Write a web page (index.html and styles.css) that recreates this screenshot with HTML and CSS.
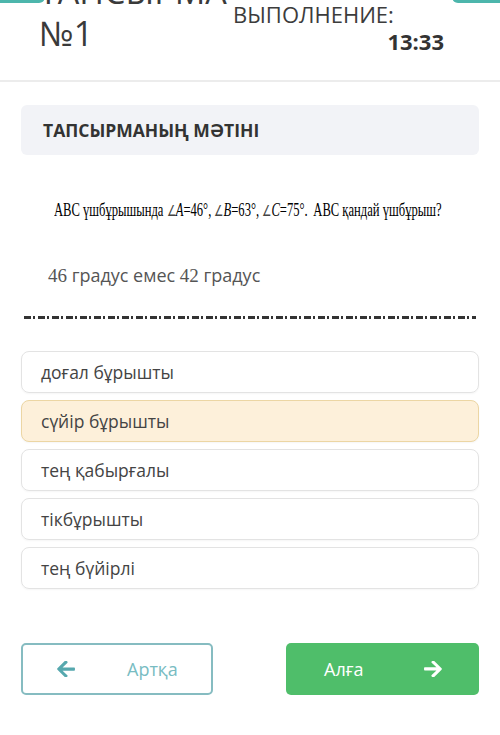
FILE: index.html
```html
<!DOCTYPE html>
<html lang="kk">
<head>
    <meta charset="UTF-8">
    <meta name="viewport" content="width=device-width, initial-scale=1.0">
    <title>Тапсырма №1</title>
    <link rel="stylesheet" href="styles.css">
</head>
<body>
    <header class="top">
        <span class="tab tab-left"></span>
        <span class="tab tab-right"></span>
        <div class="top-inner">
            <h1 class="task-title">ТАПСЫРМА<br>№1</h1>
            <div class="timer">
                <span class="timer-label">ВЫПОЛНЕНИЕ:</span>
                <span class="timer-value">13:33</span>
            </div>
        </div>
    </header>

    <main class="content">
        <div class="card-head">ТАПСЫРМАНЫҢ МӘТІНІ</div>

        <div class="question"><span class="question-text">ABC үшбұрышында <span class="ang">∠</span><i>A</i>=46°, <span class="ang">∠</span><i>B</i>=63°, <span class="ang">∠</span><i>C</i>=75°.&nbsp; ABC қандай үшбұрыш?</span></div>

        <p class="note"><span class="num">46</span> градус емес <span class="num">42</span> градус</p>

        <div class="dashes"></div>

        <ul class="answers">
            <li class="answer">доғал бұрышты</li>
            <li class="answer selected">сүйір бұрышты</li>
            <li class="answer">тең қабырғалы</li>
            <li class="answer">тікбұрышты</li>
            <li class="answer">тең бүйірлі</li>
        </ul>

        <div class="nav">
            <button class="btn btn-back">
                <svg width="18" height="16" viewBox="0 0 448 400"><path d="M257 370l-22 22c-9 9-25 9-34 0L10 201c-10-10-10-25 0-34L201-24c9-9 25-9 34 0l22 22c10 10 9 26 0 35L138 146h286c13 0 24 11 24 24v32c0 13-11 24-24 24H138l119 113c10 9 10 25 0 35z" transform="translate(0 16)"/></svg>
                <span>Артқа</span>
            </button>
            <button class="btn btn-next">
                <span>Алға</span>
                <svg width="18" height="16" viewBox="0 0 448 400"><path d="M191 30l22-22c9-9 25-9 34 0l191 191c10 10 10 25 0 34L247 424c-9 9-25 9-34 0l-22-22c-10-10-9-26 0-35l119-113H24c-13 0-24-11-24-24v-32c0-13 11-24 24-24h286L191 61c-10-9-10-25 0-31z" transform="translate(0 -16)"/></svg>
            </button>
        </div>
    </main>
</body>
</html>
```

FILE: styles.css
```css
body {
    margin: 0;
    font-family: 'Open Sans', 'Noto Sans', sans-serif;
    color: #3c3c3c;
    background: #fff;
    overflow: hidden;
}
.top {
    position: relative;
    height: 80px;
    border-bottom: 2px solid #ececec;
    overflow: hidden;
}
.tab {
    position: absolute;
    top: -10px;
    height: 13px;
    background: #4db6ac;
}
.tab-left {
    left: -10px;
    width: 55px;
    border-radius: 0 0 6px 0;
}
.tab-right {
    right: -10px;
    width: 58px;
    border-radius: 0 0 0 6px;
}
.top-inner {
    display: flex;
    margin-top: -30px;
    padding-left: 39px;
}
.task-title {
    margin: 0;
    font-size: 34px;
    line-height: 42px;
    font-weight: 400;
    color: #3a3a3a;
    width: 194px;
}
.timer {
    display: flex;
    flex-direction: column;
    width: 211px;
    padding-top: 31px;
}
.timer-label {
    font-size: 22px;
    line-height: 26px;
    color: #3c3c3c;
}
.timer-value {
    align-self: flex-end;
    font-size: 22px;
    font-weight: 700;
    line-height: 28px;
    color: #333;
}
.content {
    padding: 0 21px;
}
.card-head {
    margin-top: 23px;
    background: #f2f3f7;
    border-radius: 6px;
    height: 50px;
    padding-left: 22px;
    display: flex;
    align-items: center;
    font-size: 17.5px;
    font-weight: 700;
    color: #333;
}
.question {
    margin: 44px 0 0 33px;
    height: 22px;
    white-space: nowrap;
    overflow: hidden;
}
.question-text {
    display: inline-block;
    font-family: 'Liberation Serif', serif;
    font-size: 18px;
    line-height: 22px;
    color: #000;
    transform: scaleX(0.7);
    transform-origin: left center;
}
.ang {
    font-size: 15px;
    color: #444;
}
.note {
    margin: 42px 0 0 27px;
    font-size: 18px;
    line-height: 24px;
    color: #555;
}
.num {
    font-family: 'Liberation Serif', serif;
    font-size: 19px;
}
.dashes {
    margin: 28px 3px 0 3px;
    height: 3px;
    background: repeating-linear-gradient(90deg, #333 0 7px, transparent 7px 9px, #333 9px 11px, transparent 11px 14px);
}
.answers {
    list-style: none;
    margin: 32px 0 0;
    padding: 0;
    display: flex;
    flex-direction: column;
    gap: 7px;
}
.answer {
    height: 40px;
    border: 1px solid #e3e3e3;
    border-radius: 8px;
    padding-left: 19px;
    display: flex;
    align-items: center;
    font-size: 17.5px;
    color: #444;
    box-shadow: 0 1px 2px rgba(0, 0, 0, 0.04);
}
.answer.selected {
    background: #fdf0da;
    border-color: #ecd6a4;
}
.nav {
    display: flex;
    justify-content: space-between;
    margin-top: 54px;
}
.btn {
    width: 192px;
    height: 52px;
    border-radius: 5px;
    font-family: 'Open Sans', sans-serif;
    font-size: 18px;
    display: flex;
    align-items: center;
    cursor: pointer;
}
.btn-back {
    background: #fff;
    border: 2px solid #86bcc1;
    color: #78bcc2;
    padding: 0 0 0 34px;
}
.btn-back svg {
    fill: #56a8ae;
    margin-right: 52px;
}
.btn-next {
    background: #4fbe6a;
    border: none;
    color: #fff;
    padding: 0 0 0 38px;
    width: 193px;
}
.btn-next svg {
    fill: #fff;
    margin-left: 61px;
}
```
